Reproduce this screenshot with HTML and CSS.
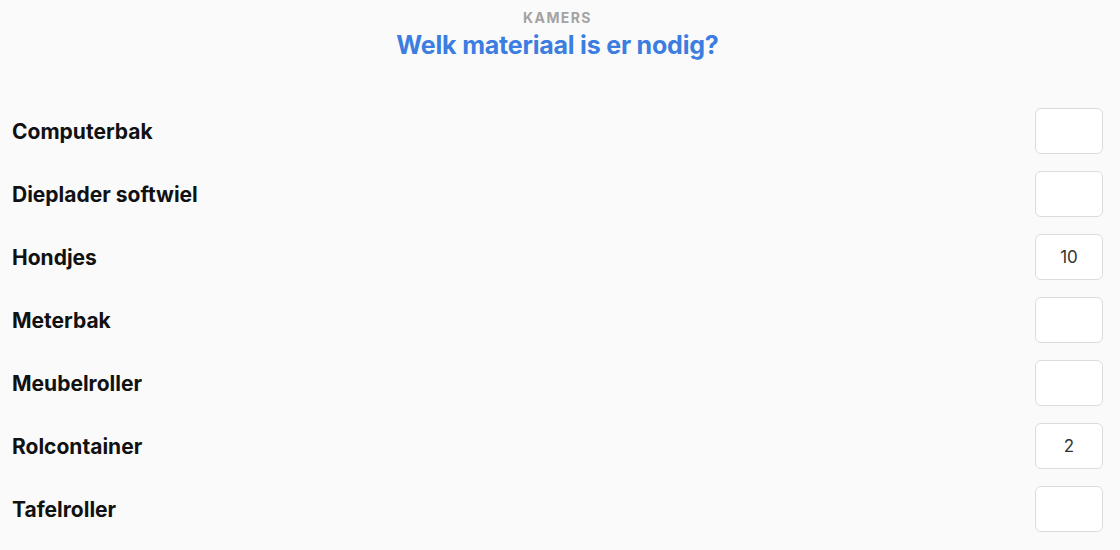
FILE: index.html
```html
<!DOCTYPE html>
<html lang="nl">
<head>
    <meta charset="UTF-8">
    <meta name="viewport" content="width=device-width, initial-scale=1.0">
    <title>Materiaal</title>
    <link rel="stylesheet" href="styles.css">
</head>
<body>
    <main class="pagina">
        <div class="kop">
            <div class="sub">KAMERS</div>
            <h1 class="titel">Welk materiaal is er nodig?</h1>
        </div>
        <div class="lijst">
            <div class="rij">
                <span class="naam">Computerbak</span>
                <input class="aantal" type="text" value="">
            </div>
            <div class="rij">
                <span class="naam">Dieplader softwiel</span>
                <input class="aantal" type="text" value="">
            </div>
            <div class="rij">
                <span class="naam">Hondjes</span>
                <input class="aantal" type="text" value="10">
            </div>
            <div class="rij">
                <span class="naam">Meterbak</span>
                <input class="aantal" type="text" value="">
            </div>
            <div class="rij">
                <span class="naam">Meubelroller</span>
                <input class="aantal" type="text" value="">
            </div>
            <div class="rij">
                <span class="naam">Rolcontainer</span>
                <input class="aantal" type="text" value="2">
            </div>
            <div class="rij">
                <span class="naam">Tafelroller</span>
                <input class="aantal" type="text" value="">
            </div>
        </div>
    </main>
</body>
</html>
```

FILE: styles.css
```css
body{
    margin: 0;
    padding: 0;
    background-color: #fafafa;
    font-family: Inter, "Noto Sans", sans-serif;
}
.pagina{
    padding: 10px 17px 0 12px;
}
.kop{
    text-align: center;
}
.sub{
    color: #a3a3a3;
    font-size: 14px;
    line-height: 16px;
    font-weight: 700;
    letter-spacing: 1.4px;
}
.titel{
    margin: 3px 0 0 0;
    color: #3b7de0;
    font-size: 25px;
    line-height: 32px;
    font-weight: 700;
    letter-spacing: -0.2px;
}
.lijst{
    margin-top: 47px;
    display: flex;
    flex-direction: column;
    gap: 17px;
}
.rij{
    display: flex;
    justify-content: space-between;
    align-items: center;
}
.naam{
    color: #111;
    font-size: 21px;
    font-weight: 700;
}
.aantal{
    box-sizing: border-box;
    width: 68px;
    height: 46px;
    border: 1px solid #dcdcdc;
    border-radius: 6px;
    background-color: white;
    text-align: center;
    font-family: Inter, "Noto Sans", sans-serif;
    font-size: 17px;
    font-weight: 400;
    color: #333;
    outline: none;
}
```
